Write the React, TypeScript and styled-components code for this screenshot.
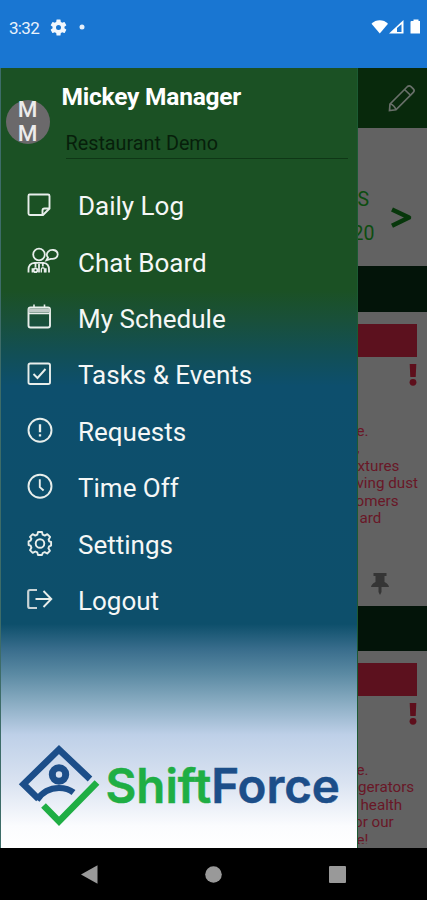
import React from 'react';
import styled, { createGlobalStyle } from 'styled-components';

const GlobalStyle = createGlobalStyle`
  * { box-sizing: border-box; }
  body { margin: 0; background: #000; font-family: Roboto, sans-serif; }
  svg { display: block; flex: none; overflow: visible; }
`;

const Screen = styled.div`
  width: 427px;
  height: 900px;
  display: flex;
  flex-direction: column;
  overflow: hidden;
  background: #000;
`;

const StatusBar = styled.header`
  height: 68px;
  flex: none;
  padding: 0 6px 14px 9px;
  display: flex;
  align-items: center;
  justify-content: space-between;
  background: #1976d2;
  color: #e9f2fb;
`;

const StatusGroup = styled.div`
  display: flex;
  align-items: center;
`;

const Clock = styled.span`
  width: 42px;
  font-size: 17px;
  letter-spacing: -0.7px;
  line-height: 20px;
  padding-top: 1px;
`;

const Gap = styled.span`
  width: 13px;
`;

const Body = styled.div`
  height: 780px;
  flex: none;
  display: flex;
`;

const Drawer = styled.aside`
  width: 357.5px;
  flex: none;
  display: flex;
  flex-direction: column;
  border-left: 1.5px solid #3d6c68;
  border-right: 1px solid #1c5a33;
  background: linear-gradient(
    180deg,
    #1b5124 0, #1b5124 222px, #19503a 252px, #124f55 285px, #0d4f6d 318px,
    #0d4f6b 556px, #3a6e8d 582px, #5b8aa3 606px, #85a9bf 632px, #bed0e8 667px,
    #dae3f1 715px, #fbfcfe 758px, #fff 780px
  );
`;

const Profile = styled.div`
  height: 109px;
  display: flex;
  padding: 0 8.5px 0 4.5px;
`;

const Avatar = styled.div`
  width: 44px;
  height: 44px;
  margin-top: 32px;
  padding-bottom: 2px;
  flex: none;
  border-radius: 50%;
  background: #6b696b;
  color: #ecebec;
  font-size: 22.5px;
  line-height: 24px;
  text-align: center;
  font-weight: 500;
  display: flex;
  flex-direction: column;
  justify-content: center;
`;

const ProfileText = styled.div`
  flex: 1;
  padding: 14px 0 0 12px;
`;

const UserName = styled.div`
  color: #fff;
  font-size: 24.5px;
  line-height: 30px;
  font-weight: 700;
  letter-spacing: -0.22px;
  white-space: nowrap;
`;

const Company = styled.div`
  margin: 17px 0 0 4px;
  height: 30px;
  padding-top: 1px;
  border-bottom: 1.5px solid #0f3716;
  color: #071f0b;
  font-size: 19.8px;
  line-height: 27px;
`;

const Menu = styled.nav`
  display: flex;
  flex-direction: column;
`;

const MenuItem = styled.a`
  height: 56.4px;
  display: flex;
  align-items: center;
  padding: 2px 0 0 24.5px;
  color: #f5f7f6;
  font-size: 26px;
  line-height: 32px;
  white-space: nowrap;
`;

const IconSlot = styled.span`
  width: 52.5px;
  height: 28px;
  margin-top: -3px;
  display: flex;
  align-items: center;
`;

const Brand = styled.div`
  display: flex;
  align-items: center;
  margin-top: 116px;
  padding-left: 17px;
`;

const Wordmark = styled.div`
  margin: 0 0 0 5.5px;
  font-family: Inter, sans-serif;
  font-size: 47.5px;
  line-height: 56px;
  font-weight: 600;
  letter-spacing: -0.05px;
  color: #1fae44;
  -webkit-text-stroke: 0.5px currentColor;
  white-space: nowrap;
`;

const WordBlue = styled.span`
  color: #1c4e89;
`;

const Page = styled.main`
  flex: 1;
  min-width: 0;
  overflow: hidden;
  display: flex;
  flex-direction: column;
  background: #626262;
`;

const AppBar = styled.div`
  height: 60px;
  flex: none;
  padding: 16px 11px 0 0;
  display: flex;
  justify-content: flex-end;
  background: #08290c;
`;

const DateNav = styled.div`
  height: 138px;
  flex: none;
  display: flex;
  padding-top: 54px;
  color: #0d4d10;
  font-size: 19.5px;
  line-height: 33.5px;
`;

const DateText = styled.div`
  width: 33.5px;
  padding-top: 1px;
`;

const DateLine = styled.div<{ $shift: number }>`
  margin-left: ${(p) => p.$shift}px;
`;

const Chevron = styled.div`
  padding-top: 24px;
`;

const Band = styled.div<{ $h: number }>`
  height: ${(p) => p.$h}px;
  flex: none;
  background: #031409;
`;

const Card = styled.section<{ $h: number }>`
  height: ${(p) => p.$h}px;
  flex: none;
  padding-top: 12px;
  overflow: hidden;
`;

const CardTitle = styled.div`
  height: 33px;
  margin-right: 10px;
  background: #5c111e;
`;

const AlertRow = styled.div`
  height: 65.500px;
  padding: 7px 10.5px 0 0;
  display: flex;
  justify-content: flex-end;
`;

const Copy = styled.div<{ $h: number }>`
  height: ${(p) => p.$h}px;
  overflow: hidden;
  color: #691727;
  font-size: 15.2px;
  line-height: 17.6px;
`;

const CopyLine = styled.div<{ $shift: number }>`
  height: 17.6px;
  margin-left: ${(p) => p.$shift}px;
  white-space: nowrap;
`;

const PinRow = styled.div`
  padding: 28px 0 0 13px;
`;

const NavBar = styled.footer`
  height: 52px;
  flex: none;
  display: grid;
  grid-template-columns: 179px 69px 1fr;
  align-items: center;
  justify-items: center;
  background: #000;
`;

const line = { fill: 'none', stroke: '#e8eeeb', strokeWidth: 1.9 } as const;

const NoteIcon = () => (
  <svg width="26" height="26" viewBox="0 0 26 26" {...line}>
    <path d="M3.500 2.500h18.500q1.500 0 1.500 1.500v12.500l-6.500 6.500h-13Q2.500 23 2.500 21.500V4Q2.500 2.500 3.500 2.500Z" />
    <path d="M23 16.500h-4.500q-2 0-2 2V23" />
  </svg>
);

const ChatIcon = () => (
  <svg width="34" height="28" viewBox="0 0 34 28" {...line} strokeWidth={1.8}>
    <circle cx="13" cy="7.500" r="5.800" />
    <path d="M22 10.500c-1.500-1.500-1.700-4 .2-5.900 1.600-1.600 3.600-1.900 5.300-1.600 2.600.4 4.200 2.300 4.200 4.500 0 2.900-3 4.900-6.900 4.300L20.500 13.200Z" />
    <path d="M2.500 25.500V22.500q0-6 6-6.700h9q5.500.7 5.500 6.700v3M6.500 25.500v-4.200M19.700 25.500v-4.200M9.500 16v4.500M16.800 16v3.500M13 17v8.500" />
    <circle cx="9.500" cy="23.200" r="1.900" />
    <path d="M15.300 25.500V22.500q0-1.800 1.600-1.800t1.600 1.800v3" strokeWidth="1.400" />
  </svg>
);

const CalendarIcon = () => (
  <svg width="26" height="28" viewBox="0 0 26 28" {...line}>
    <rect x="2.500" y="4.500" width="21.500" height="20" rx="2" />
    <path d="M2.500 7.500H24" strokeWidth="4" stroke="#bfcac6" />
    <path d="M2.500 10.500H24M8 1.500V5M18.500 1.500V5" strokeWidth="1.600" />
  </svg>
);

const TaskIcon = () => (
  <svg width="26" height="26" viewBox="0 0 26 26" {...line}>
    <rect x="2.500" y="2.500" width="21.500" height="20.500" rx="1.800" />
    <path d="m7.500 13 4 4 8-9" />
  </svg>
);

const RequestIcon = () => (
  <svg width="27" height="27" viewBox="0 0 27 27" {...line}>
    <circle cx="14" cy="13.300" r="11.500" />
    <path d="M14 7.300v8M14 17.300v2.200" strokeWidth="2.300" />
  </svg>
);

const TimeIcon = () => (
  <svg width="27" height="27" viewBox="0 0 27 27" {...line}>
    <circle cx="14" cy="13.300" r="11.500" />
    <path d="M13.800 6.300v7.800l3.800 3.400" />
  </svg>
);

const GearIcon = () => (
  <svg width="27" height="27" viewBox="0 0 27 27" {...line} strokeLinejoin="round">
    <path d="M11.300 4.700 12 2h4l.7 2.700 2.100.9 2.500-1.400 2.800 2.700-1.500 2.500.5 1.900 2 .7v3.600l-2 .7-.7 2 1.500 2.500-2.700 2.700-2.500-1.400-2 .9L16 25h-4l-.7-2.600-2-.9-2.600 1.400L4 20.200l1.400-2.500-.8-2-2-.7v-3.600l2-.7.8-2L4 6.900l2.700-2.700 2.600 1.400Z" />
    <circle cx="14" cy="13.500" r="4.300" />
  </svg>
);

const LogoutIcon = () => (
  <svg width="27" height="24" viewBox="0 0 27 24" {...line}>
    <path d="M11 3H4Q2.200 3 2.200 4.800v14.400Q2.200 21 4 21h7" stroke="#c9d4d6" strokeWidth="2.200" />
    <path d="M9.500 12h15.500M17.500 4l7.800 8-7.800 8" />
  </svg>
);

const StatusGear = () => (
  <svg width="15" height="15" viewBox="3 3 18 18" fill="#f1f7fd">
    <path d="M19.140 12.940c.04-.3.060-.61.060-.94 0-.32-.02-.64-.07-.94l2.030-1.580a.49.49 0 0 0 .12-.61l-1.920-3.320a.49.49 0 0 0-.59-.22l-2.390.96a7 7 0 0 0-1.620-.94l-.36-2.540a.48.48 0 0 0-.48-.41h-3.840a.48.48 0 0 0-.47.41l-.36 2.540c-.59.24-1.130.57-1.620.94l-2.390-.96a.48.48 0 0 0-.59.22L2.740 8.870a.48.48 0 0 0 .12.61l2.030 1.580a7 7 0 0 0 0 1.880l-2.030 1.580a.49.49 0 0 0-.12.610l1.920 3.320c.12.22.37.29.59.22l2.390-.96c.5.380 1.030.7 1.620.94l.36 2.540c.05.24.24.41.48.41h3.840c.24 0 .44-.17.47-.41l.36-2.540a7 7 0 0 0 1.620-.94l2.390.96c.22.080.47 0 .59-.22l1.920-3.320a.48.48 0 0 0-.12-.61ZM12 15a3 3 0 1 1 0-6 3 3 0 0 1 0 6Z" />
  </svg>
);

const DotIcon = () => (
  <svg width="6" height="6" viewBox="0 0 6 6"><circle cx="3" cy="3" r="2.500" fill="#e4effb" /></svg>
);

const SignalIcons = () => (
  <svg width="50" height="16" viewBox="0 0 50 16" fill="#fff">
    <path d="M.5 4.700C5 .1 12.500.1 17 4.700L8.800 14.500Z" />
    <path d="M18 14.500 32.500 1v13.500Z" />
    <path d="M26 9v4h4.500V5.200Z" fill="#1976d2" />
    <path d="M40.500 2h2V.5h5V2H49v12.500H39.500V3q0-1 1-1Z" />
  </svg>
);

const PencilIcon = () => (
  <svg width="28" height="28" viewBox="0 0 28 28" fill="none" stroke="#69706a" strokeWidth="1.700">
    <path d="m2 20 17.500-17.500q1.700-1.500 3.500.1l2.300 2.300q1.700 1.800 0 3.500L8 25.800l-6.500.7Z" />
    <path d="m16.500 5.500 6.300 6M2.200 19.700q4 1.500 5.800 6" />
  </svg>
);

const ChevronIcon = () => (
  <svg width="22" height="24" viewBox="0 0 22 24" fill="none" stroke="#07370b" strokeWidth="4.500">
    <path d="m1 3.500 17 8-17 8.200" strokeLinejoin="round" />
  </svg>
);

const AlertIcon = () => (
  <svg width="8" height="22" viewBox="0 0 8 22" fill="#5e0f1c">
    <path d="M.7 0h6.600L6.700 13H1.300Z" />
    <circle cx="4" cy="18.300" r="3.400" />
  </svg>
);

const PinIcon = () => (
  <svg width="18" height="22" viewBox="0 0 18 22" fill="#353535">
    <path d="M2.500 0h13v3h-2v6q4 2 4.500 5h-7.500v5L9 22l-1.500-3v-5H0q.5-3 4.500-5V3h-2Z" />
  </svg>
);

const ShiftLogo = () => (
  <svg width="82" height="83" viewBox="0 0 82 83" fill="none">
    <path d="M72 35 41 5.500 5.500 40.200 20.500 55" stroke="#1c4e89" strokeWidth="6.600" />
    <path d="M19 56Q27 44 41 44q9 0 14.500 4.500" stroke="#1c4e89" strokeWidth="6.200" />
    <circle cx="41" cy="30.500" r="6.700" stroke="#1c4e89" strokeWidth="7" />
    <path d="M25.500 61.500 41 77.300 79 38.500" stroke="#1fae44" strokeWidth="6.600" />
  </svg>
);

const BackIcon = () => (
  <svg width="17" height="19" viewBox="0 0 17 19"><path d="M0 9.500 16.500.3v18.400Z" fill="#999" /></svg>
);
const HomeIcon = () => (
  <svg width="17" height="17" viewBox="0 0 17 17"><circle cx="8.500" cy="8.500" r="8.300" fill="#999" /></svg>
);
const RecentIcon = () => (
  <svg width="17" height="17" viewBox="0 0 17 17"><rect width="17" height="17" rx="1" fill="#999" /></svg>
);

const items = [
  { label: 'Daily Log', Icon: NoteIcon },
  { label: 'Chat Board', Icon: ChatIcon },
  { label: 'My Schedule', Icon: CalendarIcon },
  { label: 'Tasks & Events', Icon: TaskIcon },
  { label: 'Requests', Icon: RequestIcon },
  { label: 'Time Off', Icon: TimeIcon },
  { label: 'Settings', Icon: GearIcon },
  { label: 'Logout', Icon: LogoutIcon },
];

const firstNote = [
  { text: 'e.', shift: -1 },
  { text: ',', shift: -1 },
  { text: 'xtures', shift: 0 },
  { text: 'ving dust', shift: -1 },
  { text: 'omers', shift: -2 },
  { text: 'ard', shift: 2 },
];

const secondNote = [
  { text: 'e.', shift: -1 },
  { text: 'gerators', shift: 0.5 },
  { text: 'health', shift: 3 },
  { text: 'or our', shift: -3.5 },
  { text: 'e!', shift: -1 },
];

export default function App() {
  return (
    <Screen>
      <GlobalStyle />
      <StatusBar>
        <StatusGroup>
          <Clock>3:32</Clock>
          <StatusGear />
          <Gap />
          <DotIcon />
        </StatusGroup>
        <SignalIcons />
      </StatusBar>
      <Body>
        <Drawer>
          <Profile>
            <Avatar><span>M</span><span>M</span></Avatar>
            <ProfileText>
              <UserName>Mickey Manager</UserName>
              <Company>Restaurant Demo</Company>
            </ProfileText>
          </Profile>
          <Menu>
            {items.map(({ label, Icon }) => (
              <MenuItem key={label}>
                <IconSlot><Icon /></IconSlot>
                {label}
              </MenuItem>
            ))}
          </Menu>
          <Brand>
            <ShiftLogo />
            <Wordmark>Shift<WordBlue>Force</WordBlue></Wordmark>
          </Brand>
        </Drawer>
        <Page>
          <AppBar><PencilIcon /></AppBar>
          <DateNav>
            <DateText>
              <DateLine $shift={0}>S</DateLine>
              <DateLine $shift={-5}>20</DateLine>
            </DateText>
            <Chevron><ChevronIcon /></Chevron>
          </DateNav>
          <Band $h={46} />
          <Card $h={294}>
            <CardTitle />
            <AlertRow><AlertIcon /></AlertRow>
            <Copy $h={122}>
              {firstNote.map((l) => <CopyLine key={l.text} $shift={l.shift}>{l.text}</CopyLine>)}
            </Copy>
            <PinRow><PinIcon /></PinRow>
          </Card>
          <Band $h={45} />
          <Card $h={197}>
            <CardTitle />
            <AlertRow><AlertIcon /></AlertRow>
            <Copy $h={82}>
              {secondNote.map((l) => <CopyLine key={l.text} $shift={l.shift}>{l.text}</CopyLine>)}
            </Copy>
          </Card>
        </Page>
      </Body>
      <NavBar>
        <BackIcon />
        <HomeIcon />
        <RecentIcon />
      </NavBar>
    </Screen>
  );
}
